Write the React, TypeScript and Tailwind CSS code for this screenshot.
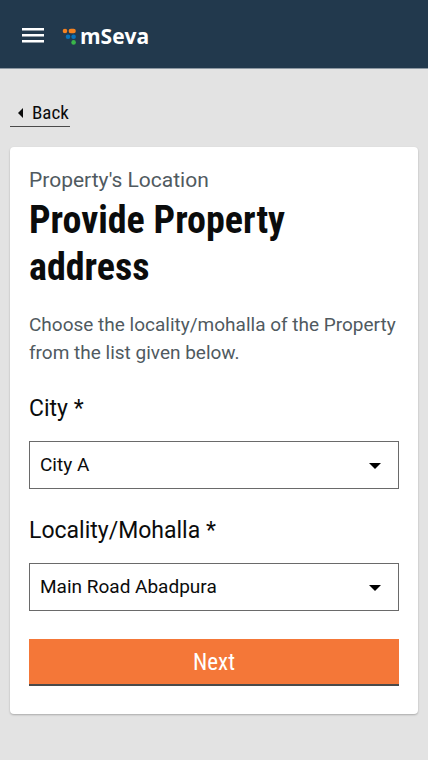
import { useState } from "react";

const condensed = "font-['Roboto_Condensed','Roboto','Liberation_Sans_Narrow',sans-serif]";

type SelectFieldProps = { id: string; label: string; options: string[] };

function SelectField({ id, label, options }: SelectFieldProps) {
  const [value, setValue] = useState(options[0]);
  return (
    <div className="mb-7">
      <label htmlFor={id} className="mb-[18px] block text-[23px] leading-7 text-[#0b0c0c]">
        {label} *
      </label>
      <div className="relative">
        <select
          id={id}
          value={value}
          onChange={(e) => setValue(e.target.value)}
          className="block h-12 w-full appearance-none border border-[#6a6a6a] bg-white pr-10 pl-[10px] text-[19px] text-[#0b0c0c]"
        >
          {options.map((option) => (
            <option key={option}>{option}</option>
          ))}
        </select>
        <svg className="pointer-events-none absolute top-[22px] right-[18px] h-[6px] w-3" viewBox="0 0 12 6" aria-hidden="true">
          <path d="M0 0h12L6 6z" fill="#000" />
        </svg>
      </div>
    </div>
  );
}

export default function App() {
  return (
    <div className="min-h-screen bg-[#e3e3e3] font-['Roboto',sans-serif]">
      <header className="flex h-[69px] items-center gap-[18px] border-b border-[#8d98a2] bg-[#22394d] px-[22px] pt-[2px]">
        <button type="button" aria-label="Menu" className="block">
          <svg width="22" height="16" viewBox="0 0 22 16" fill="#fff" aria-hidden="true">
            <path d="M0 1h22v2.4H0zM0 7h22v2.4H0zM0 13h22v2.4H0z" />
          </svg>
        </button>
        <div className="flex items-center gap-1 pt-[2px]">
          <svg width="14" height="17" viewBox="0 0 14 17" aria-hidden="true">
            <circle cx="3" cy="3" r="2.3" fill="#f58220" />
            <rect x="6.6" y="0.8" width="7.2" height="4.4" rx="2.2" fill="#f58220" />
            <circle cx="6" cy="8.8" r="2.3" fill="#0873bb" />
            <circle cx="11.6" cy="8.8" r="2.3" fill="#0873bb" />
            <circle cx="11.6" cy="14.4" r="2.3" fill="#39b54a" />
          </svg>
          <span className="font-['Open_Sans','Noto_Sans',sans-serif] text-[21px] leading-6 font-bold text-white">mSeva</span>
        </div>
      </header>
      <main className="px-[10px] pt-[30px] pb-[46px]">
        <a
          href="#back"
          className={`${condensed} mb-5 inline-flex h-7 items-center border-b border-[#4a4a4a] pt-px pr-px pl-2 text-[19px] text-[#0b0c0c]`}
        >
          <svg className="mr-[9px]" width="5" height="10" viewBox="0 0 5 10" aria-hidden="true">
            <path d="M5 0v10L0 5z" fill="#0b0c0c" />
          </svg>
          Back
        </a>
        <form
          onSubmit={(e) => e.preventDefault()}
          className="rounded bg-white px-[19px] pt-[19px] pb-7 shadow-[0_1px_2px_rgba(0,0,0,0.25)]"
        >
          <p className="text-[21px] leading-7 text-[#505a5f]">Property's Location</p>
          <h1 className={`${condensed} mt-[3px] mb-5 text-[38px] leading-[47px] font-bold text-[#0b0c0c]`}>
            Provide Property address
          </h1>
          <p className="mb-7 text-[19px] leading-7 text-[#505a5f]">
            Choose the locality/mohalla of the Property from the list given below.
          </p>
          <SelectField id="city" label="City" options={["City A"]} />
          <SelectField id="locality" label="Locality/Mohalla" options={["Main Road Abadpura"]} />
          <button
            type="submit"
            className={`${condensed} block h-[47px] w-full border-b-2 border-[#4a4a4a] bg-[#f47738] pt-[3px] text-[23px] text-white`}
          >
            Next
          </button>
        </form>
      </main>
    </div>
  );
}
